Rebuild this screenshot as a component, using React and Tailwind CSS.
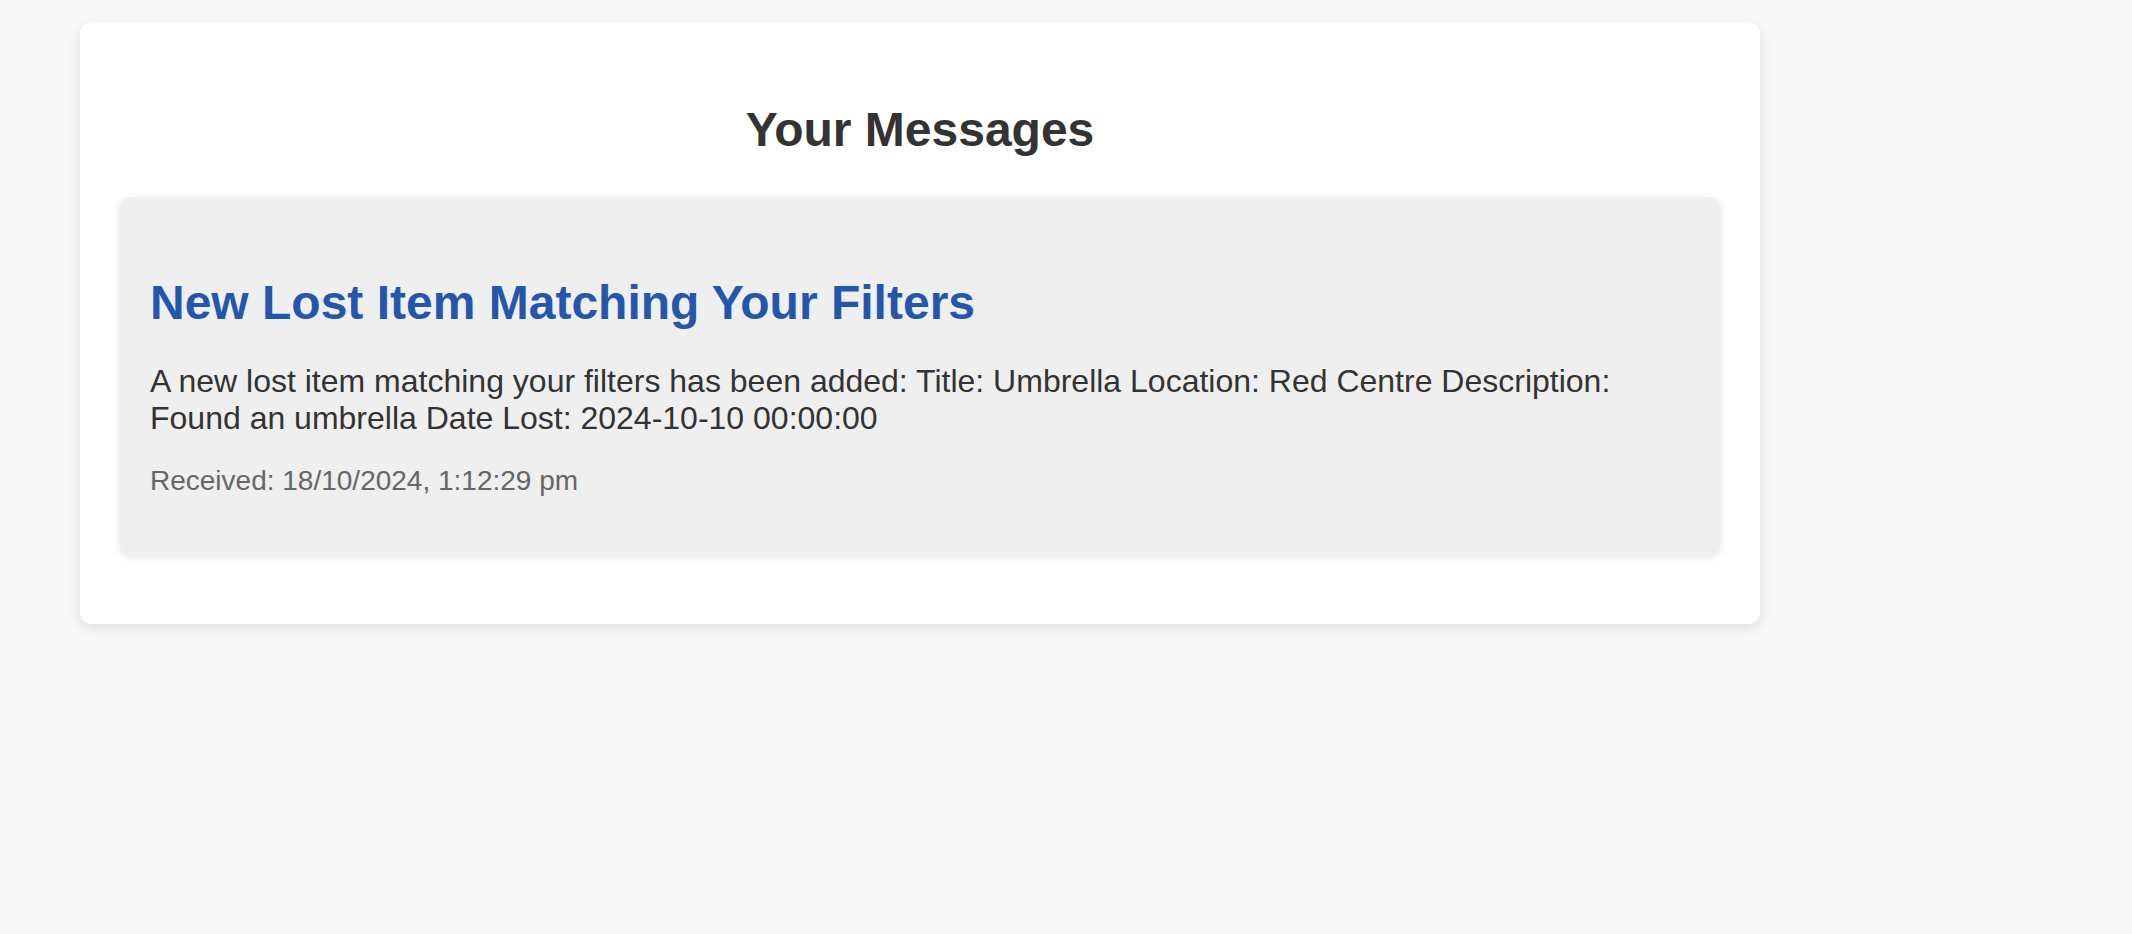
export default function App() {
  const message = {
    title: 'New Lost Item Matching Your Filters',
    body: 'A new lost item matching your filters has been added: Title: Umbrella Location: Red Centre Description: Found an umbrella Date Lost: 2024-10-10 00:00:00',
    received: '18/10/2024, 1:12:29 pm',
  };

  return (
    <main className="min-h-screen bg-[#f8f8f8] pt-[22px] pl-[80px] leading-[1.15] font-['Liberation_Sans',Arial,sans-serif]">
      <div className="w-[1680px] bg-white rounded-[12px] shadow-[0_4px_14px_rgba(0,0,0,0.1)] px-[40px] pt-[40px] pb-[69px]">
        <h2 className="text-[48px] font-bold text-[#333] text-center my-[40px]">Your Messages</h2>

        <div className="bg-[#efefef] rounded-[10px] shadow-[0_2px_8px_rgba(0,0,0,0.1)] px-[30px] pt-[30px] pb-[30px]">
          <h3 className="text-[48px] font-bold text-[#2457ab] mt-[48px]">{message.title}</h3>
          <p className="text-[32px] text-[#333] mt-[33px]">{message.body}</p>
          <p className="text-[28px] text-[#666] mt-[28px] mb-[28px]">Received: {message.received}</p>
        </div>
      </div>
    </main>
  );
}
